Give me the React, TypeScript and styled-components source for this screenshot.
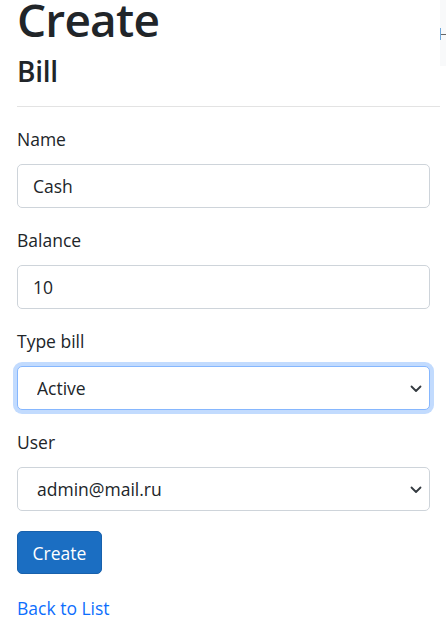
import React from "react"

import styled, { createGlobalStyle } from "styled-components"

const Global = createGlobalStyle`
  body {
    margin: 0;
    background: #fff;
    font-family: "Open Sans", "Noto Sans", sans-serif;
    color: #212529;
  }
`
const Page = styled.div`
  position: relative;
  width: 446px;
  height: 626px;
  overflow: hidden;
  padding: 0 6px 0 17px;
  box-sizing: border-box;
`
const Title = styled.h1`
  margin: 0;
  font-size: 46px;
  line-height: 38px;
  font-weight: 600;
  letter-spacing: -0.8px;
`
const Sub = styled.h4`
  margin: 16px 0 0;
  font-size: 28px;
  line-height: 34px;
  font-weight: 600;
  letter-spacing: -0.3px;
`
const Rule = styled.hr`
  margin: 18px 0 20px;
  border: 0;
  border-top: 1px solid #e3e3e3;
`
const Form = styled.form`
  width: 413px;
  display: flex;
  flex-direction: column;
`
const Group = styled.div`
  display: flex;
  flex-direction: column;
  margin-bottom: 20px;
`
const Label = styled.label`
  font-size: 17.5px;
  line-height: 25px;
  margin-bottom: 12px;
`
const Input = styled.input`
  height: 44px;
  box-sizing: border-box;
  border: 1px solid #ced4da;
  border-radius: 5px;
  padding: 0 15px;
  font: inherit;
  font-size: 17.5px;
  color: #212529;
  background: #fff;
  outline: none;
`
const SelectWrap = styled.div`
  position: relative;
`
const Select = styled.select<{ $focus?: boolean }>`
  width: 100%;
  height: 44px;
  box-sizing: border-box;
  appearance: none;
  border: 1px solid ${p => (p.$focus ? "#86b7fe" : "#ced4da")};
  box-shadow: ${p => (p.$focus ? "0 0 0 4px rgba(13,110,253,.25)" : "none")};
  border-radius: 5px;
  padding: 0 40px 0 19px;
  font: inherit;
  font-size: 17.5px;
  color: #212529;
  background: #fff;
  outline: none;
`
const Chevron = styled.svg`
  position: absolute;
  right: 8px;
  top: 19px;
  pointer-events: none;
`
const Button = styled.button`
  align-self: flex-start;
  width: 85px;
  height: 43px;
  border: 1px solid #1861ac;
  border-radius: 5px;
  background: #1b6ec2;
  color: #fff;
  font: inherit;
  font-size: 17.5px;
  padding: 0;
`
const Back = styled.a`
  display: block;
  margin-top: 22px;
  font-size: 17.5px;
  line-height: 25px;
  color: #0d6efd;
  text-decoration: none;
`
const Edge = styled.div`
  position: absolute;
  top: 0;
  right: 0;
  width: 6px;
  height: 66px;
  background: #f8f9fa;
`
const EdgeBar = styled.div`
  position: absolute;
  left: 0;
  top: 28px;
  width: 1px;
  height: 12px;
  background: #6fa8dc;
`
const EdgeLine = styled.div`
  position: absolute;
  left: 1px;
  right: 0;
  top: 34px;
  height: 1px;
  background: #666;
`

function Arrow() {
  return (
    <Chevron width="12" height="8" viewBox="0 0 12 8">
      <path d="M1.5 1.5 6 6l4.5-4.5" fill="none" stroke="#343a40" strokeWidth="1.8" strokeLinecap="round" strokeLinejoin="round" />
    </Chevron>
  )
}

export default function App() {
  return (
    <Page>
      <Global />
      <Title>Create</Title>
      <Sub>Bill</Sub>
      <Rule />
      <Form onSubmit={e => e.preventDefault()}>
        <Group>
          <Label>Name</Label>
          <Input defaultValue="Cash" />
        </Group>
        <Group>
          <Label>Balance</Label>
          <Input defaultValue="10" />
        </Group>
        <Group>
          <Label>Type bill</Label>
          <SelectWrap>
            <Select $focus defaultValue="Active">
              <option>Active</option>
              <option>Passive</option>
            </Select>
            <Arrow />
          </SelectWrap>
        </Group>
        <Group>
          <Label>User</Label>
          <SelectWrap>
            <Select defaultValue="admin@mail.ru">
              <option>admin@mail.ru</option>
            </Select>
            <Arrow />
          </SelectWrap>
        </Group>
        <Button type="submit">Create</Button>
      </Form>
      <Back href="#">Back to List</Back>
      <Edge>
        <EdgeBar />
        <EdgeLine />
      </Edge>
    </Page>
  )
}
